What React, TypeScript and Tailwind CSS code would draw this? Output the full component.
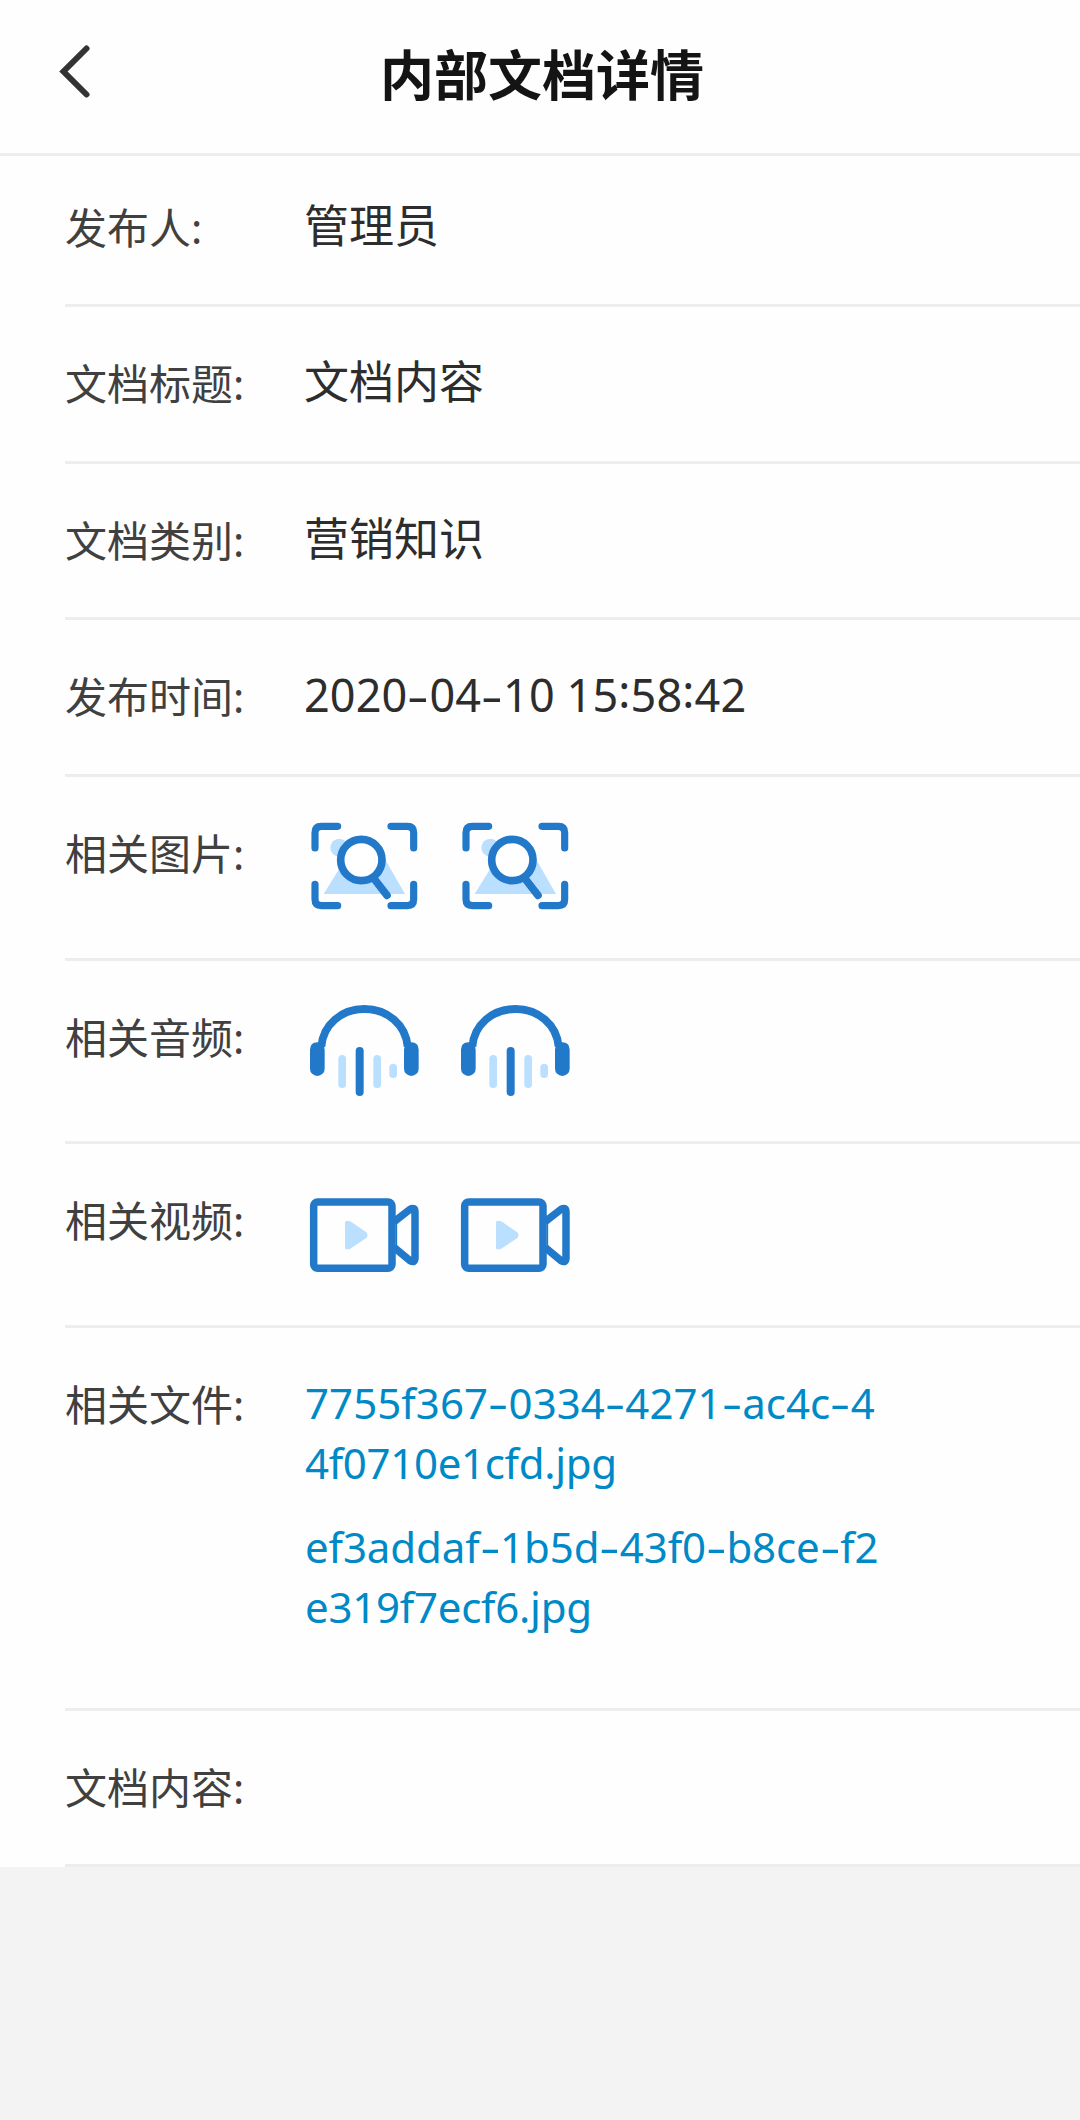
import type { ReactNode } from "react";

const BLUE = "#2278c9";
const PALE = "#bbdfff";

function ImageIcon() {
  return (
    <svg viewBox="45 45 360 300" className="h-[100px] w-[120px]" fill="none">
      <circle cx="148" cy="143" r="27" fill={PALE} />
      <path d="M101 282 L184 148 H268 L345 282 Z" fill={PALE} />
      <circle cx="214" cy="180" r="62" fill="#fff" stroke={BLUE} strokeWidth="23" />
      <g stroke={BLUE} strokeWidth="21.5" strokeLinecap="round">
        <path d="M252 236 L291 286" strokeWidth="23" />
        <path d="M75 144 V98 Q75 79 94 79 H143" />
        <path d="M303 79 H352 Q371 79 371 98 V144" />
        <path d="M75 253 V298 Q75 317 94 317 H143" />
        <path d="M303 317 H352 Q371 317 371 298 V253" />
      </g>
    </svg>
  );
}

function AudioIcon() {
  return (
    <svg viewBox="45 57 360 300" className="h-[100px] w-[120px]" fill="none">
      <path d="M94 200 C99 134 154 87 223 87 S347 134 353 200" stroke={BLUE} strokeWidth="23.5" />
      <path
        d="M60 209 Q60 188 82 187 Q104 188 104 209 V266 A22 22 0 0 1 60 266 Z M342 209 Q342 188 364 187 Q386 188 386 209 V266 A22 22 0 0 1 342 266 Z"
        fill={BLUE}
      />
      <rect x="145" y="225" width="23" height="99" rx="11.5" fill={PALE} />
      <rect x="197" y="201" width="24" height="147" rx="12" fill={BLUE} />
      <rect x="250" y="225" width="23" height="99" rx="11.5" fill={PALE} />
      <rect x="298" y="251" width="23" height="43" rx="11.5" fill={PALE} />
    </svg>
  );
}

function VideoIcon() {
  return (
    <svg viewBox="45 36 360 300" className="h-[100px] w-[120px]" fill="none">
      <rect x="71" y="96" width="235" height="199" rx="12" stroke={BLUE} strokeWidth="22.5" />
      <path
        d="M312 155 L360 118 Q375 110 375 126 V264 Q375 280 360 272 L312 232"
        stroke={BLUE}
        strokeWidth="22.5"
      />
      <path d="M319 158 V232" stroke={BLUE} strokeWidth="5" />
      <path
        d="M165 157 Q165 153 169 153 H176 Q180 153 184 156 L229 187 Q236 196 229 204 L184 234 Q180 238 176 238 H169 Q165 238 165 234 Z"
        fill={PALE}
      />
    </svg>
  );
}

/* Splits on hyphens so that each one can be drawn wide, like the digits around it. */
function WideDashText({ text }: { text: string }) {
  return (
    <>
      {text.split(/([-:])/).map((part, i) =>
        part === "-" ? (
          <span key={i} className="inline-block w-[0.487em] scale-x-150 text-center">
            -
          </span>
        ) : part === ":" ? (
          <span key={i} className="relative -top-[0.08em]">
            :
          </span>
        ) : (
          <span key={i}>{part}</span>
        ),
      )}
    </>
  );
}

function Row({ label, height, children }: { label: string; height: string; children?: ReactNode }) {
  return (
    <div className={`ml-[65px] flex items-start border-b-3 border-[#ededed] ${height}`}>
      <div className="mt-[47px] w-[240px] shrink-0 text-[42px] leading-[60px] text-[#404040]">{label}</div>
      {children}
    </div>
  );
}

function Value({ children }: { children: ReactNode }) {
  return (
    <div className="mt-[45px] -ml-px text-[45px] leading-[60px] whitespace-nowrap text-[#2d2d2d]">{children}</div>
  );
}

function Icons({ children }: { children: ReactNode }) {
  return <div className="mt-[38px] flex gap-[30.5px]">{children}</div>;
}

export default function App() {
  return (
    <div className="min-h-[2120px] w-[1080px] bg-[#f3f3f3] font-['Noto_Sans','Noto_Sans_CJK_SC',sans-serif]">
      <div className="bg-[#fefefe]">
        <header className="grid h-[156px] grid-cols-[200px_1fr_200px] items-center border-b-3 border-[#ededed]">
          <svg viewBox="0 0 40 60" className="ml-[55px] h-[60px] w-[40px] -translate-y-[5px]" fill="none">
            <path d="M31.5 6.5 L8.5 29.5 L31.5 52.5" stroke="#333" strokeWidth="6" strokeLinecap="round" />
          </svg>
          <h1 className="-mt-1 pl-1 text-center text-[54px] leading-[80px] font-bold text-[#141414]">内部文档详情</h1>
        </header>
        <main>
          <div className="-mt-[5px]">
            <Row label="发布人:" height="h-[156px]">
              <Value>管理员</Value>
            </Row>
          </div>
          <Row label="文档标题:" height="h-[157px]">
            <Value>文档内容</Value>
          </Row>
          <Row label="文档类别:" height="h-[156px]">
            <Value>营销知识</Value>
          </Row>
          <Row label="发布时间:" height="h-[157px]">
            <Value>
              <span className="tracking-[0.13px]">
                <WideDashText text="2020-04-10 15:58:42" />
              </span>
            </Value>
          </Row>
          <Row label="相关图片:" height="h-[184px]">
            <Icons>
              <ImageIcon />
              <ImageIcon />
            </Icons>
          </Row>
          <Row label="相关音频:" height="h-[183px]">
            <Icons>
              <AudioIcon />
              <AudioIcon />
            </Icons>
          </Row>
          <Row label="相关视频:" height="h-[184px]">
            <Icons>
              <VideoIcon />
              <VideoIcon />
            </Icons>
          </Row>
          <Row label="相关文件:" height="h-[383px]">
            <div className="mt-[45px] flex flex-col gap-6 text-[42px] leading-[60px] whitespace-nowrap text-[#0089c7]">
              <div>
                <div className="tracking-[0.06px]">
                  <WideDashText text="7755f367-0334-4271-ac4c-4" />
                </div>
                <div className="tracking-[-0.32px]">4f0710e1cfd.jpg</div>
              </div>
              <div>
                <div className="tracking-[-0.1px]">
                  <WideDashText text="ef3addaf-1b5d-43f0-b8ce-f2" />
                </div>
                <div className="tracking-[-0.25px]">e319f7ecf6.jpg</div>
              </div>
            </div>
          </Row>
          <Row label="文档内容:" height="h-[156px]" />
        </main>
      </div>
    </div>
  );
}
